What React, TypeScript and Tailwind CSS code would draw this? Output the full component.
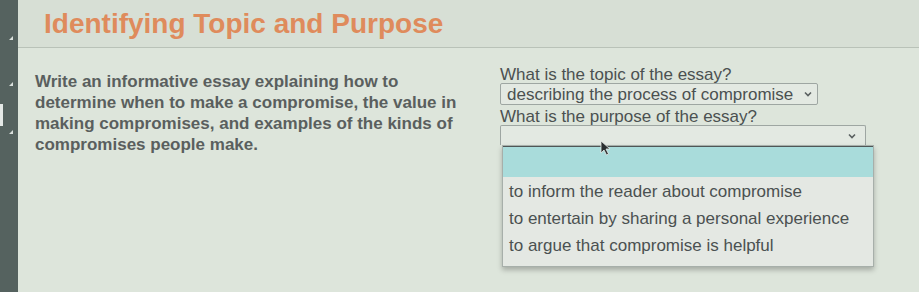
import React from "react";

const OPTIONS = [
  "to inform the reader about compromise",
  "to entertain by sharing a personal experience",
  "to argue that compromise is helpful",
];

function Chevron() {
  return (
    <svg width="10" height="8" viewBox="0 0 10 8" className="text-[#5a6060]">
      <path d="M2 2.5 L5 5.5 L8 2.5" fill="none" stroke="currentColor" strokeWidth="1.6" />
    </svg>
  );
}

function Cursor() {
  return (
    <svg width="12" height="16" viewBox="0 0 12 16" className="absolute left-[100px] top-[15px]">
      <path d="M1 1 L1 13 L4 10 L6.5 15 L8.5 14 L6 9 L10 9 Z" fill="#2b2f30" stroke="#e8ece8" strokeWidth="0.8" />
    </svg>
  );
}

function SideStrip() {
  return (
    <div className="relative w-[18px] shrink-0 bg-[#55625f]">
      <span className="absolute left-[9px] top-[36px] h-0 w-0 border-b-[4px] border-l-[4px] border-b-[#d9dfdc] border-l-transparent" />
      <span className="absolute left-[9px] top-[82px] h-0 w-0 border-b-[4px] border-l-[4px] border-b-[#d9dfdc] border-l-transparent" />
      <span className="absolute left-0 top-[104px] h-[22px] w-[3px] bg-[#e4e8e6]" />
      <span className="absolute left-[9px] top-[130px] h-0 w-0 border-b-[4px] border-l-[4px] border-b-[#d9dfdc] border-l-transparent" />
    </div>
  );
}

export default function App() {
  return (
    <div
      className="flex h-[292px] w-[919px] overflow-hidden bg-[#dde5db] text-[#4b5151]"
      style={{ fontFamily: '"Liberation Sans", Arial, sans-serif' }}
    >
      <SideStrip />
      <div className="flex flex-1 flex-col">
        <header className="flex h-[48px] shrink-0 items-center border-b border-[#b9c2b8] bg-[#d7dfd5] pl-[26px]">
          <h1 className="text-[28px] font-bold text-[#df8b5c]">Identifying Topic and Purpose</h1>
        </header>

        <div className="flex flex-1">
          <div className="w-[465px] shrink-0 pl-[17px] pt-[23px]">
            <p className="w-[440px] text-[17px] font-bold leading-[21px] text-[#5a5f5e]">
              Write an informative essay explaining how to determine when to make a compromise, the value in
              making compromises, and examples of the kinds of compromises people make.
            </p>
          </div>

          <div className="flex flex-col pl-[17px] pt-[18px] text-[17px] leading-[17px]">
            <div>What is the topic of the essay?</div>
            <div className="flex h-[22px] w-[318px] items-center justify-between rounded-[2px] border border-[#9ea6a2] bg-[#e3e9e2] pl-[6px] pr-[4px]">
              <span>describing the process of compromise</span>
              <Chevron />
            </div>
            <div className="mt-[3px]">What is the purpose of the essay?</div>
            <div className="relative w-[366px]">
              <div className="flex h-[20px] items-center justify-end rounded-t-[2px] border border-b-0 border-[#9ea6a2] bg-[#e3e9e2] pr-[8px]">
                <Chevron />
              </div>
              <div className="absolute left-[2px] top-[20px] w-[372px] border border-[#a7afaa] bg-[#e4e8e3] shadow-[0_3px_5px_rgba(0,0,0,0.25)]">
                <div className="h-[31px] border-t border-[#4f5656] bg-[#a9dcdb]" />
                <ul className="flex flex-col pb-[7px] pt-[1px]">
                  {OPTIONS.map((o) => (
                    <li key={o} className="flex h-[27px] items-center pl-[6px]">
                      {o}
                    </li>
                  ))}
                </ul>
              </div>
              <Cursor />
            </div>
          </div>
        </div>
      </div>
    </div>
  );
}
